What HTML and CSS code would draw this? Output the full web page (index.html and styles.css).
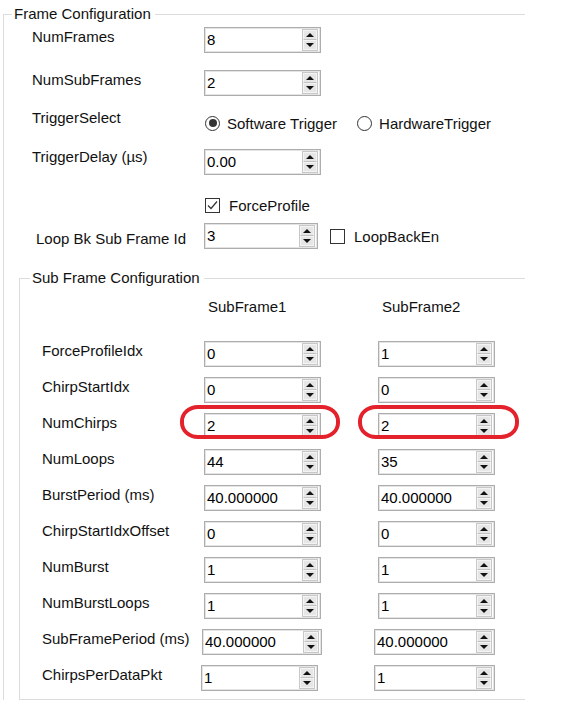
FILE: index.html
```html
<!DOCTYPE html>
<html lang="en">
<head>
    <meta charset="UTF-8">
    <meta name="viewport" content="width=device-width, initial-scale=1.0">
    <title>Frame Configuration</title>
    <link rel="stylesheet" href="styles.css">
</head>
<body>
    <div class="group frame">
        <div class="group-title">Frame Configuration</div>

        <div class="row gap-4">
            <span class="label">NumFrames</span>
            <div class="spin"><span class="value">8</span><span class="arrows"><span class="btn up"></span><span class="btn down"></span></span></div>
        </div>
        <div class="row gap-17">
            <span class="label">NumSubFrames</span>
            <div class="spin"><span class="value">2</span><span class="arrows"><span class="btn up"></span><span class="btn down"></span></span></div>
        </div>
        <div class="row gap-14">
            <span class="label raised">TriggerSelect</span>
            <label class="option"><span class="radio checked"></span>Software Trigger</label>
            <label class="option next"><span class="radio"></span>HardwareTrigger</label>
        </div>
        <div class="row gap-13">
            <span class="label raised">TriggerDelay (µs)</span>
            <div class="spin"><span class="value">0.00</span><span class="arrows"><span class="btn up"></span><span class="btn down"></span></span></div>
        </div>
        <div class="row gap-17">
            <span class="label"></span>
            <label class="option check-option"><span class="check checked"><svg width="13" height="13" viewBox="0 0 13 13"><path d="M2 6.5 L5 9.5 L11 2.5" fill="none" stroke="#333" stroke-width="1.2"/></svg></span>ForceProfile</label>
        </div>
        <div class="row gap-5 loop-row">
            <span class="label lowered">Loop Bk Sub Frame Id</span>
            <div class="spin narrow"><span class="value">3</span><span class="arrows"><span class="btn up"></span><span class="btn down"></span></span></div>
            <label class="option check-option after-spin"><span class="check"></span>LoopBackEn</label>
        </div>

        <div class="group sub">
            <div class="group-title sub-title">Sub Frame Configuration</div>

            <div class="sub-grid sub-head">
                <span></span>
                <span class="col-head">SubFrame1</span>
                <span class="col-head">SubFrame2</span>
            </div>

            <div class="sub-grid sub-row first">
                <span class="label">ForceProfileIdx</span>
                <div class="spin"><span class="value">0</span><span class="arrows"><span class="btn up"></span><span class="btn down"></span></span></div>
                <div class="spin"><span class="value">1</span><span class="arrows"><span class="btn up"></span><span class="btn down"></span></span></div>
            </div>
            <div class="sub-grid sub-row">
                <span class="label">ChirpStartIdx</span>
                <div class="spin"><span class="value">0</span><span class="arrows"><span class="btn up"></span><span class="btn down"></span></span></div>
                <div class="spin"><span class="value">0</span><span class="arrows"><span class="btn up"></span><span class="btn down"></span></span></div>
            </div>
            <div class="sub-grid sub-row">
                <span class="label">NumChirps</span>
                <div class="cell">
                    <div class="spin"><span class="value">2</span><span class="arrows"><span class="btn up"></span><span class="btn down"></span></span></div>
                    <span class="mark mark-a"></span>
                </div>
                <div class="cell">
                    <div class="spin"><span class="value">2</span><span class="arrows"><span class="btn up"></span><span class="btn down"></span></span></div>
                    <span class="mark mark-b"></span>
                </div>
            </div>
            <div class="sub-grid sub-row">
                <span class="label">NumLoops</span>
                <div class="spin"><span class="value">44</span><span class="arrows"><span class="btn up"></span><span class="btn down"></span></span></div>
                <div class="spin"><span class="value">35</span><span class="arrows"><span class="btn up"></span><span class="btn down"></span></span></div>
            </div>
            <div class="sub-grid sub-row">
                <span class="label">BurstPeriod (ms)</span>
                <div class="spin"><span class="value">40.000000</span><span class="arrows"><span class="btn up"></span><span class="btn down"></span></span></div>
                <div class="spin"><span class="value">40.000000</span><span class="arrows"><span class="btn up"></span><span class="btn down"></span></span></div>
            </div>
            <div class="sub-grid sub-row">
                <span class="label">ChirpStartIdxOffset</span>
                <div class="spin"><span class="value">0</span><span class="arrows"><span class="btn up"></span><span class="btn down"></span></span></div>
                <div class="spin"><span class="value">0</span><span class="arrows"><span class="btn up"></span><span class="btn down"></span></span></div>
            </div>
            <div class="sub-grid sub-row">
                <span class="label">NumBurst</span>
                <div class="spin"><span class="value">1</span><span class="arrows"><span class="btn up"></span><span class="btn down"></span></span></div>
                <div class="spin"><span class="value">1</span><span class="arrows"><span class="btn up"></span><span class="btn down"></span></span></div>
            </div>
            <div class="sub-grid sub-row">
                <span class="label">NumBurstLoops</span>
                <div class="spin"><span class="value">1</span><span class="arrows"><span class="btn up"></span><span class="btn down"></span></span></div>
                <div class="spin"><span class="value">1</span><span class="arrows"><span class="btn up"></span><span class="btn down"></span></span></div>
            </div>
            <div class="sub-grid sub-row">
                <span class="label">SubFramePeriod (ms)</span>
                <div class="spin shift-2 w120"><span class="value">40.000000</span><span class="arrows"><span class="btn up"></span><span class="btn down"></span></span></div>
                <div class="spin shift-4 w121"><span class="value">40.000000</span><span class="arrows"><span class="btn up"></span><span class="btn down"></span></span></div>
            </div>
            <div class="sub-grid sub-row">
                <span class="label">ChirpsPerDataPkt</span>
                <div class="spin shift-3"><span class="value">1</span><span class="arrows"><span class="btn up"></span><span class="btn down"></span></span></div>
                <div class="spin shift-4 w121"><span class="value">1</span><span class="arrows"><span class="btn up"></span><span class="btn down"></span></span></div>
            </div>
        </div>
    </div>
</body>
</html>
```

FILE: styles.css
```css
body {
    margin: 0;
    background-color: white;
    font-family: "Liberation Sans", Arial, sans-serif;
    font-size: 15px;
    color: #111;
}
.group {
    box-sizing: border-box;
    border-top: 1px solid #dcdcdc;
    border-left: 1px solid #dcdcdc;
}
.frame {
    width: 522px;
    margin: 14px 0 0 3px;
}
.group-title {
    width: fit-content;
    margin: -10px 0 0 8px;
    padding: 0 4px 0 2px;
    line-height: 18px;
    background-color: white;
}
.row {
    display: flex;
    align-items: center;
    height: 26px;
    padding-left: 28px;
}
.gap-4 { margin-top: 4px; }
.gap-5 { margin-top: 5px; }
.gap-13 { margin-top: 13px; }
.gap-14 { margin-top: 14px; }
.gap-17 { margin-top: 17px; }
.label {
    width: 172px;
    flex-shrink: 0;
    line-height: 18px;
    margin-bottom: 6px;
    white-space: nowrap;
}
.label.raised {
    margin-bottom: 10px;
}
.loop-row {
    padding-left: 32px;
}
.loop-row .label {
    width: 168px;
    margin-bottom: 0;
    margin-top: 5px;
}
.spin {
    box-sizing: border-box;
    display: flex;
    width: 117px;
    height: 26px;
    border: 1px solid #adadad;
    box-shadow: inset 0 0 0 1px #e4e4e4;
    background-color: white;
    color: #000;
}
.spin.narrow { width: 114px; }
.spin.w120 { width: 120px; }
.spin.w121 { width: 121px; }
.spin.shift-2 { margin-left: -2px; }
.spin.shift-3 { margin-left: -3px; }
.spin.shift-4 { margin-left: -4px; }
.value {
    flex: 1;
    padding: 3px 0 0 2px;
    line-height: 18px;
}
.arrows {
    display: flex;
    flex-direction: column;
    width: 16px;
    margin: 1px 2px 1px 0;
    background-color: #dcdcdc;
    border: 1px solid #c8c8c8;
    box-sizing: border-box;
}
.btn {
    flex: 1;
    display: flex;
    align-items: center;
    justify-content: center;
    background-color: #e6e6e6;
    border: 1px solid #f4f4f4;
}
.btn.up {
    border-bottom-color: #c2c2c2;
}
.btn::after {
    content: "";
    width: 0;
    height: 0;
    border-left: 4px solid transparent;
    border-right: 4px solid transparent;
}
.btn.up::after {
    border-bottom: 4px solid #111;
}
.btn.down::after {
    border-top: 4px solid #111;
}
.option {
    display: flex;
    align-items: center;
    gap: 7px;
    margin-left: 1px;
    white-space: nowrap;
}
.option.next {
    margin-left: 20px;
}
.check-option {
    gap: 9px;
}
.after-spin {
    margin-left: 12px;
}
.radio {
    box-sizing: border-box;
    width: 15px;
    height: 15px;
    border: 1px solid #333;
    border-radius: 50%;
    display: flex;
    align-items: center;
    justify-content: center;
}
.radio.checked::after {
    content: "";
    width: 8px;
    height: 8px;
    border-radius: 50%;
    background-color: #333;
}
.check {
    box-sizing: border-box;
    width: 15px;
    height: 15px;
    border: 1px solid #333;
    display: flex;
    align-items: center;
    justify-content: center;
}
.sub {
    margin: 29px 0 0 15px;
    border-bottom: 1px solid #dcdcdc;
    padding-bottom: 8px;
}
.sub-title {
    margin-left: 10px;
}
.sub-grid {
    display: grid;
    grid-template-columns: 162px 174px 117px;
    align-items: center;
    padding-left: 22px;
}
.sub-head {
    margin-top: 11px;
    line-height: 18px;
}
.col-head {
    padding-left: 4px;
}
.sub-row {
    height: 26px;
    margin-top: 10px;
}
.sub-row.first {
    margin-top: 25px;
}
.cell {
    position: relative;
}
.mark {
    position: absolute;
    top: -8px;
    height: 34px;
    box-sizing: border-box;
    border: 4px solid #e4222b;
    border-radius: 18px / 16px;
}
.mark-a {
    left: -24px;
    width: 160px;
}
.mark-b {
    left: -20px;
    width: 161px;
}
```
